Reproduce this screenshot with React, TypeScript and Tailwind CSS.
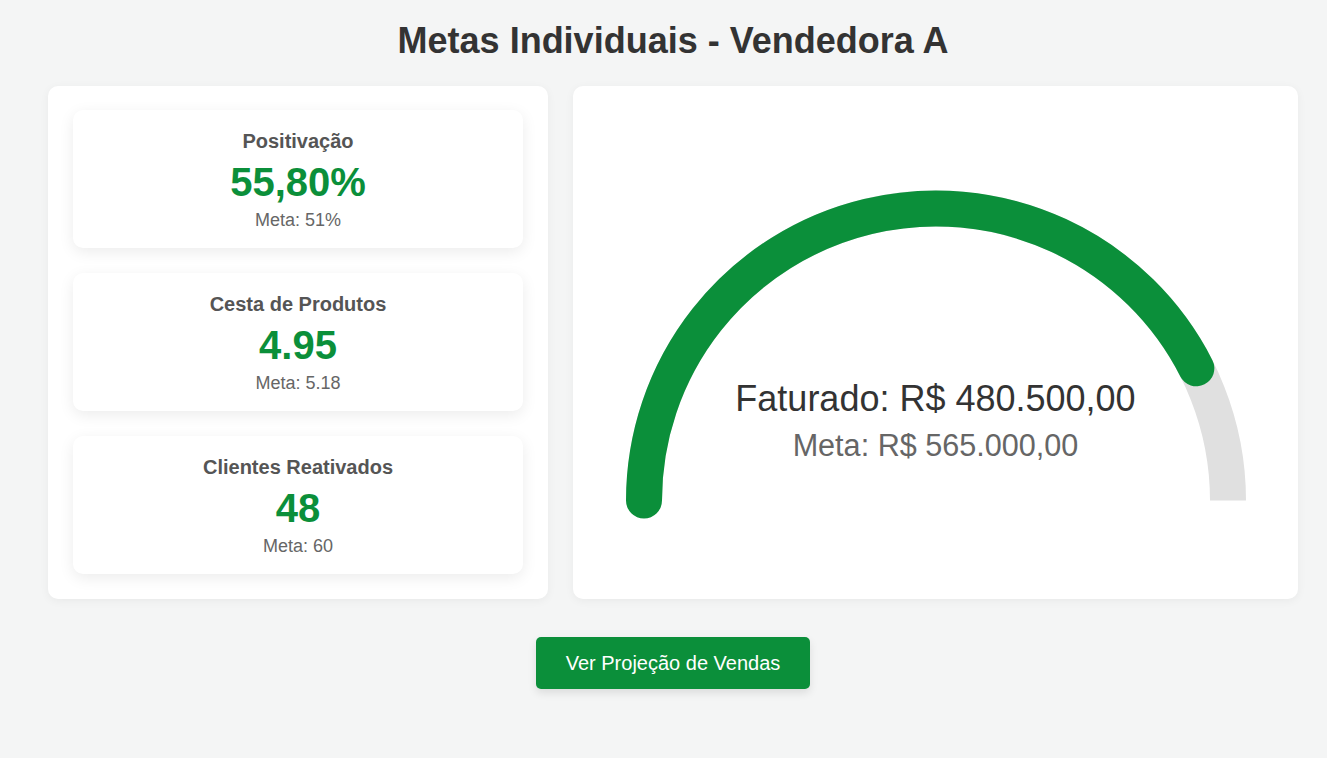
import React from "react";

const GREEN = "#0b8f3a";

function MetricCard({ label, value, meta }: { label: string; value: string; meta: string }) {
  return (
    <div className="h-[138px] rounded-[10px] bg-white pt-[20px] pb-[18px] text-center shadow-[0_4px_15px_rgba(0,0,0,0.08)]">
      <div className="text-[20px] leading-[23px] font-bold text-[#555]">{label}</div>
      <div className="mt-[6px] text-[40px] leading-[46px] font-bold text-[#0b8f3a]">{value}</div>
      <div className="mt-[5px] text-[18px] leading-[21px] text-[#666]">{meta}</div>
    </div>
  );
}

function Gauge() {
  const w = 640;
  const h = 360;
  const cx = 320;
  const cy = 337.5;
  const r = 292;
  const ratio = 480500 / 565000;
  const ang = Math.PI - ratio * Math.PI;
  const ex = cx + r * Math.cos(ang);
  const ey = cy - r * Math.sin(ang);
  return (
    <div className="relative h-[360px] w-[640px]">
      <svg width={w} height={h} viewBox={`0 0 ${w} ${h}`} className="block">
        <path
          d={`M ${cx - r} ${cy} A ${r} ${r} 0 0 1 ${cx + r} ${cy}`}
          fill="none"
          stroke="#e0e0e0"
          strokeWidth={36}
        />
        <path
          d={`M ${cx - r} ${cy} A ${r} ${r} 0 0 1 ${ex} ${ey}`}
          fill="none"
          stroke={GREEN}
          strokeWidth={36}
          strokeLinecap="round"
        />
      </svg>
      <div className="absolute left-0 right-0 top-[215px] text-center">
        <div className="text-[36px] leading-[41px] text-[#333]">Faturado: R$ 480.500,00</div>
        <div className="mt-[9px] text-[30.6px] leading-[35px] text-[#666]">Meta: R$ 565.000,00</div>
      </div>
    </div>
  );
}

export default function App() {
  return (
    <div
      className="min-h-screen w-full bg-[#f4f5f5]"
      style={{ fontFamily: '"Liberation Sans", Arial, sans-serif' }}
    >
      <div className="ml-[48px] w-[1250px] pt-[20px]">
        <h1 className="text-center text-[36px] leading-[41px] font-bold text-[#333]">
          Metas Individuais - Vendedora A
        </h1>
        <div className="mt-[25px] flex gap-[25px]">
          <div className="flex w-[500px] flex-col gap-[25px] rounded-[10px] bg-white px-[25px] pt-[24px] pb-[25px] shadow-[0_2px_10px_rgba(0,0,0,0.05)]">
            <MetricCard label="Positivação" value="55,80%" meta="Meta: 51%" />
            <MetricCard label="Cesta de Produtos" value="4.95" meta="Meta: 5.18" />
            <MetricCard label="Clientes Reativados" value="48" meta="Meta: 60" />
          </div>
          <div className="flex w-[725px] items-center justify-center rounded-[10px] bg-white shadow-[0_2px_10px_rgba(0,0,0,0.05)]">
            <Gauge />
          </div>
        </div>
        <div className="mt-[38px] flex justify-center">
          <button className="h-[52px] rounded-[5px] bg-[#0b8f3a] px-[30px] text-[20px] leading-[23px] text-white shadow-[0_4px_8px_rgba(0,0,0,0.1)]">
            Ver Projeção de Vendas
          </button>
        </div>
      </div>
    </div>
  );
}
